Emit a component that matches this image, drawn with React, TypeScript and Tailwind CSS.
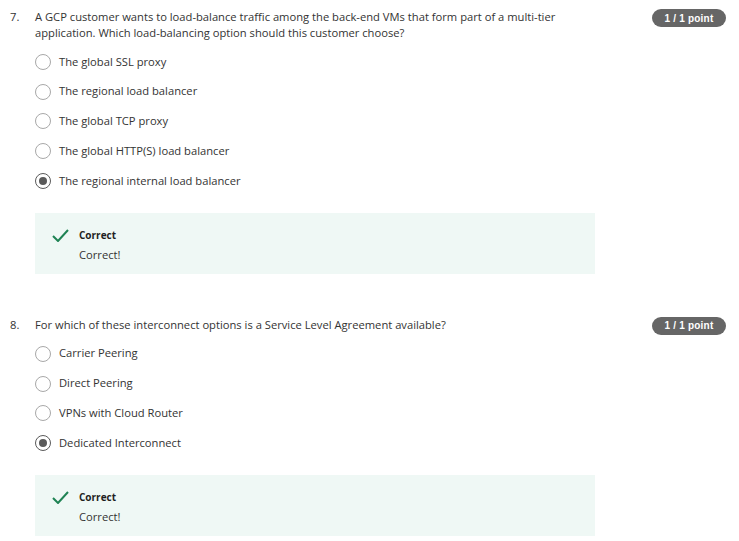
import React from 'react'

type Question = {
  number: number
  lines: string[]
  options: string[]
  selected: number
}

const questions: Question[] = [
  {
    number: 7,
    lines: [
      'A GCP customer wants to load-balance traffic among the back-end VMs that form part of a multi-tier',
      'application. Which load-balancing option should this customer choose?',
    ],
    options: [
      'The global SSL proxy',
      'The regional load balancer',
      'The global TCP proxy',
      'The global HTTP(S) load balancer',
      'The regional internal load balancer',
    ],
    selected: 4,
  },
  {
    number: 8,
    lines: ['For which of these interconnect options is a Service Level Agreement available?'],
    options: ['Carrier Peering', 'Direct Peering', 'VPNs with Cloud Router', 'Dedicated Interconnect'],
    selected: 3,
  },
]

function Radio({ checked }: { checked: boolean }) {
  return checked ? (
    <span className="flex h-[16px] w-[16px] shrink-0 items-center justify-center rounded-full border-[1.5px] border-[#5a5a5a]">
      <span className="h-[8px] w-[8px] rounded-full bg-[#5a5a5a]" />
    </span>
  ) : (
    <span className="h-[16px] w-[16px] shrink-0 rounded-full border-[1.5px] border-[#a8a8a8]" />
  )
}

function Feedback() {
  return (
    <div className="flex w-[560px] bg-[#eff8f5] pb-[11px] pl-[17px] pt-[14px]">
      <svg width="17" height="13" viewBox="0 0 17 13" className="mt-[2px] shrink-0">
        <path d="M1 7 L6 12 L16 1" fill="none" stroke="#1f8354" strokeWidth="2" />
      </svg>
      <div className="ml-[10px]">
        <div className="text-[10px] font-bold leading-[16px] text-[#1f1f1f]">Correct</div>
        <div className="mt-[4px] leading-[16px]">Correct!</div>
      </div>
    </div>
  )
}

function QuestionBlock({ q }: { q: Question }) {
  return (
    <div className="flex">
      <div className="w-[35px] shrink-0 pl-[10px] leading-[16px]">{q.number}.</div>
      <div className="flex-1">
        {q.lines.map((line) => (
          <div key={line} className="leading-[16px]">
            {line}
          </div>
        ))}
        <div className="mt-[6px] flex flex-col">
          {q.options.map((option, i) => (
            <div key={option} className="flex h-[29.8px] items-center gap-[8px]">
              <Radio checked={i === q.selected} />
              <span>{option}</span>
            </div>
          ))}
        </div>
        <div className="mt-[17px]">
          <Feedback />
        </div>
      </div>
      <div className="w-[100px] shrink-0 pr-[13px]">
        <div
          className="ml-auto flex h-[18px] w-[74px] items-center justify-center rounded-full bg-[#666666] text-[10px] font-bold tracking-[0.2px] text-white"
          style={{ fontFamily: '"Liberation Sans", Arial, sans-serif' }}
        >
          1&nbsp;/&nbsp;1 point
        </div>
      </div>
    </div>
  )
}

export default function App() {
  return (
    <div
      className="flex h-[541px] w-[739px] flex-col gap-[43px] bg-white pt-[9px] text-[11.2px] text-[#333333]"
      style={{ fontFamily: '"Open Sans", sans-serif' }}
    >
      {questions.map((q) => (
        <QuestionBlock key={q.number} q={q} />
      ))}
    </div>
  )
}
